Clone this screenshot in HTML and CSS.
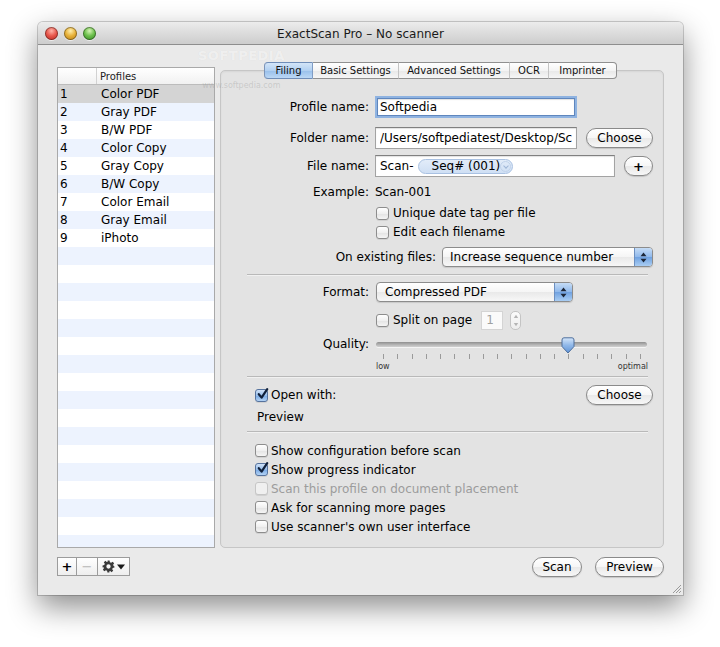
FILE: index.html
```html
<!DOCTYPE html>
<html>
<head>
<meta charset="utf-8">
<title>ExactScan Pro – No scanner</title>
<link rel="stylesheet" href="styles.css">
</head>
<body>
<div class="page">
  <div class="window">
    <div class="titlebar">
      <div class="lights"><span class="light red"></span><span class="light yellow"></span><span class="light green"></span></div>
      <div class="title">ExactScan Pro – No scanner</div>
      <div></div>
    </div>

    <div class="content">
      <div class="list">
        <div class="list-head"><span class="col-num"></span><span class="col-name">Profiles</span></div>
        <div class="list-body">
          <div class="lrow sel"><span class="col-num">1</span><span class="col-name">Color PDF</span></div>
          <div class="lrow"><span class="col-num">2</span><span class="col-name">Gray PDF</span></div>
          <div class="lrow"><span class="col-num">3</span><span class="col-name">B/W PDF</span></div>
          <div class="lrow"><span class="col-num">4</span><span class="col-name">Color Copy</span></div>
          <div class="lrow"><span class="col-num">5</span><span class="col-name">Gray Copy</span></div>
          <div class="lrow"><span class="col-num">6</span><span class="col-name">B/W Copy</span></div>
          <div class="lrow"><span class="col-num">7</span><span class="col-name">Color Email</span></div>
          <div class="lrow"><span class="col-num">8</span><span class="col-name">Gray Email</span></div>
          <div class="lrow"><span class="col-num">9</span><span class="col-name">iPhoto</span></div>
        </div>
      </div>

      <div class="panel">
        <div class="tabs">
          <div class="tab sel t-filing">Filing</div>
          <div class="tab t-basic">Basic Settings</div>
          <div class="tab t-adv">Advanced Settings</div>
          <div class="tab t-ocr">OCR</div>
          <div class="tab t-imp">Imprinter</div>
        </div>
        <div class="tabbox">
          <div class="frow r-profile"><span class="flabel">Profile name:</span><div class="field focus w-profile">Softpedia</div></div>
          <div class="frow r-folder"><span class="flabel">Folder name:</span><div class="field w-folder"><span class="clip">/Users/softpediatest/Desktop/Sc</span></div><div class="btn w-choose">Choose</div></div>
          <div class="frow r-file"><span class="flabel">File name:</span>
            <div class="field w-token">Scan-<span class="token">Seq# (001)<span class="chev"></span></span></div>
            <div class="btn w-plus">+</div>
          </div>
          <div class="frow r-example"><span class="flabel">Example:</span><span>Scan-001</span></div>
          <div class="frow r-unique indent"><span class="cb"></span><span>Unique date tag per file</span></div>
          <div class="frow r-edit indent"><span class="cb"></span><span>Edit each filename</span></div>
          <div class="frow r-existing"><span class="flabel wide">On existing files:</span>
            <div class="popup w-existing"><span>Increase sequence number</span><span class="arrows"><svg width="7" height="11" viewBox="0 0 7 11"><path d="M0.5 4.2 L3.5 0.6 L6.5 4.2Z M0.5 6.8 L3.5 10.4 L6.5 6.8Z" fill="#1d2738"/></svg></span></div>
          </div>
          <div class="sep s1"></div>
          <div class="frow r-format"><span class="flabel">Format:</span>
            <div class="popup w-format"><span>Compressed PDF</span><span class="arrows"><svg width="7" height="11" viewBox="0 0 7 11"><path d="M0.5 4.2 L3.5 0.6 L6.5 4.2Z M0.5 6.8 L3.5 10.4 L6.5 6.8Z" fill="#1d2738"/></svg></span></div>
          </div>
          <div class="frow r-split indent"><span class="cb"></span><span>Split on page</span><div class="numfield">1</div><div class="stepper"><svg width="6" height="15" viewBox="0 0 6 15"><path d="M0.8 5 L3 1.8 L5.2 5Z M0.8 10 L3 13.2 L5.2 10Z" fill="#b4b4b4"/></svg></div></div>
          <div class="frow r-quality"><span class="flabel">Quality:</span>
            <div class="slider"><div class="track"></div>
              <svg class="thumb" width="14" height="17" viewBox="0 0 14 17"><defs><linearGradient id="tg" x1="0" y1="0" x2="0" y2="1"><stop offset="0" stop-color="#d5e6fa"/><stop offset="0.5" stop-color="#8fb7e8"/><stop offset="1" stop-color="#5f93d6"/></linearGradient></defs><path d="M1 3 Q1 0.8 3 0.8 L11 0.8 Q13 0.8 13 3 L13 9.5 L7 16 L1 9.5 Z" fill="url(#tg)" stroke="#4f6f9c" stroke-width="1"/></svg>
            </div>
          </div>
          <div class="ticks"><i></i><i></i><i></i><i></i><i></i><i></i><i></i><i></i><i></i><i></i><i></i><i></i><i></i><i></i><i></i><i></i><i></i><i></i><i></i></div>
          <div class="scale"><span>low</span><span>optimal</span></div>
          <div class="sep s2"></div>
          <div class="frow r-open lower"><span class="cb on"><svg width="13" height="13" viewBox="0 0 13 13"><path d="M2.8 6.2 L5.6 9.6 L11.2 1.2" fill="none" stroke="#10203a" stroke-width="2.2" stroke-linecap="round" stroke-linejoin="round"/></svg></span><span>Open with:</span><div class="btn w-choose push">Choose</div></div>
          <div class="frow r-preview lower"><span class="pv">Preview</span></div>
          <div class="sep s3"></div>
          <div class="frow r-c1 lower"><span class="cb"></span><span>Show configuration before scan</span></div>
          <div class="frow r-c lower"><span class="cb on"><svg width="13" height="13" viewBox="0 0 13 13"><path d="M2.8 6.2 L5.6 9.6 L11.2 1.2" fill="none" stroke="#10203a" stroke-width="2.2" stroke-linecap="round" stroke-linejoin="round"/></svg></span><span>Show progress indicator</span></div>
          <div class="frow r-c lower disabled"><span class="cb"></span><span>Scan this profile on document placement</span></div>
          <div class="frow r-c lower"><span class="cb"></span><span>Ask for scanning more pages</span></div>
          <div class="frow r-c lower"><span class="cb"></span><span>Use scanner's own user interface</span></div>
        </div>
      </div>

      <div class="tools">
        <div class="tool t-add">+</div>
        <div class="tool t-rem">−</div>
        <div class="tool t-gear"><svg width="13" height="13" viewBox="0 0 24 24"><path fill="#3a3a3a" d="M10 1h4l.6 3.2 2.3 1 2.7-1.9 2.8 2.8-1.9 2.7 1 2.3L23 12v0l0 2-3.2.6-1 2.3 1.9 2.7-2.8 2.8-2.7-1.9-2.3 1L14 23h-4l-.6-3.2-2.3-1-2.7 1.9-2.8-2.8 1.9-2.7-1-2.3L1 14v-4l3.2-.6 1-2.300-1.9-2.7 2.8-2.8 2.7 1.9 2.3-1zM12 8a4 4 0 1 0 0 8 4 4 0 1 0 0-8z"/></svg><svg width="8" height="6" viewBox="0 0 8 6"><path d="M0 0.5 L8 0.5 L4 5.5Z" fill="#1a1a1a"/></svg></div>
      </div>
      <div class="actions">
        <div class="btn w-scan">Scan</div>
        <div class="btn w-preview">Preview</div>
      </div>
    </div>

    <svg class="grip" width="12" height="12" viewBox="0 0 12 12"><path d="M11 3 L3 11 M11 6 L6 11 M11 9 L9 11" stroke="#9a9a9a" stroke-width="1"/></svg>
    <div class="watermark"><span class="wm1">SOFTPEDIA</span><span class="wm2">www.softpedia.com</span></div>
  </div>
</div>
</body>
</html>
```
FILE: styles.css
```css
* { box-sizing: border-box; }
html, body { margin: 0; padding: 0; background: #ffffff; }
body {
  width: 720px;
  height: 647px;
  overflow: hidden;
  font-family: "DejaVu Sans", "Liberation Sans", sans-serif;
  font-size: 12px;
  color: #000;
}
.page { padding: 22px 0 0 38px; }

.window {
  position: relative;
  width: 645px;
  height: 573px;
  background: #eaeaea;
  border-radius: 5px 5px 0 0;
  box-shadow: 0 12px 30px rgba(0,0,0,0.45), 0 0 0 1px rgba(0,0,0,0.18);
  display: flex;
  flex-direction: column;
}

/* title bar */
.titlebar {
  height: 23px;
  flex: none;
  display: grid;
  grid-template-columns: 1fr auto 1fr;
  align-items: center;
  background: linear-gradient(#ececec, #d9d9d9 60%, #cdcdcd);
  border-bottom: 1px solid #8e8e8e;
  border-radius: 5px 5px 0 0;
}
.lights { display: flex; gap: 6px; padding-left: 7px; }
.light {
  width: 13px; height: 13px; border-radius: 50%;
  box-shadow: inset 0 0 0 1px rgba(0,0,0,0.35), 0 1px 0 rgba(255,255,255,0.6);
}
.light.red { background: radial-gradient(circle at 50% 30%, #ffb3a8 0, #e8584d 45%, #b3231c 100%); }
.light.yellow { background: radial-gradient(circle at 50% 30%, #fff0b0 0, #e8b23a 45%, #b07712 100%); }
.light.green { background: radial-gradient(circle at 50% 30%, #d7f5b6 0, #6cc04c 45%, #2f7f1e 100%); }
.title { font-size: 12px; color: #1a1a1a; padding-top: 1px; }

/* main content */
.content {
  flex: 1;
  display: grid;
  grid-template-columns: 158px 444px;
  grid-template-rows: 486px 20px;
  column-gap: 5px;
  row-gap: 9px;
  padding: 17px 19px 18px 19px;
}

/* profiles list */
.list {
  margin-top: 5px;
  height: 481px;
  border: 1px solid #a9a9a9;
  display: flex;
  flex-direction: column;
  background: #fff;
}
.list-head {
  height: 17px;
  flex: none;
  display: flex;
  align-items: center;
  font-size: 10px;
  background: linear-gradient(#ffffff, #f1f1f1);
  border-bottom: 1px solid #bcbcbc;
}
.list-head .col-num { width: 39px; height: 100%; border-right: 1px solid #d2d2d2; }
.list-head .col-name { padding-left: 3px; color: #222; }
.list-body {
  flex: 1;
  background: repeating-linear-gradient(#ffffff 0 18px, #edf3fe 18px 36px);
}
.lrow { height: 18px; display: flex; align-items: center; }
.lrow.sel { background: #d4d4d4; }
.lrow .col-num { width: 40px; padding-left: 2px; }
.lrow .col-name { padding-left: 3px; }

/* tabs */
.panel { display: flex; flex-direction: column; }
.tabs {
  position: relative;
  z-index: 1;
  display: flex;
  height: 17px;
  margin-left: 44px;
}
.tab {
  height: 17px;
  font-size: 10px;
  color: #111;
  display: flex;
  align-items: center;
  justify-content: center;
  border-top: 1px solid #909090;
  border-bottom: 1px solid #909090;
  border-right: 1px solid #c4c4c4;
  background: linear-gradient(#ffffff, #f4f4f4 50%, #e8e8e8 51%, #f6f6f6);
}
.tab:first-child { border-left: 1px solid #7c94b8; border-radius: 4px 0 0 4px; }
.tab:last-child { border-right: 1px solid #909090; border-radius: 0 4px 4px 0; }
.tab.sel {
  background: linear-gradient(#d3e5f8, #b2d0f1 50%, #98bfeb 51%, #bcd8f5);
  border-top-color: #6f8db8;
  border-bottom-color: #6f8db8;
  border-right-color: #7f9cc4;
}
.t-filing { width: 49px; }
.t-basic { width: 86px; }
.t-adv { width: 111px; }
.t-ocr { width: 39px; }
.t-imp { width: 68px; }

.tabbox {
  margin-top: -9px;
  height: 478px;
  background: #e3e3e3;
  border: 1px solid #c6c6c6;
  border-radius: 5px;
  padding-top: 25px;
  box-shadow: inset 0 1px 2px rgba(0,0,0,0.06);
}

/* form rows */
.frow { display: flex; align-items: center; }
.flabel { width: 148px; margin-right: 6px; text-align: right; flex: none; }
.flabel.wide { width: 215px; }
.indent { padding-left: 155px; }
.lower { padding-left: 34px; }

.r-profile { height: 22px; }
.r-folder { height: 22px; margin-top: 9px; }
.r-file { height: 22px; margin-top: 6px; }
.r-example { height: 18px; margin-top: 6px; }
.r-unique { height: 18px; margin-top: 3px; }
.r-edit { height: 18px; margin-top: 1px; }
.r-existing { height: 20px; margin-top: 6px; }
.r-format { height: 20px; margin-top: 7px; }
.r-split { height: 20px; margin-top: 8px; }
.r-quality { height: 18px; margin-top: 5px; }
.r-open { height: 20px; margin-top: 8px; }
.r-preview { height: 16px; margin-top: 4px; }
.r-c1 { height: 19px; margin-top: 9px; }
.r-c { height: 19px; }

.sep { height: 1px; background: #b9b9b9; margin-left: 26px; margin-right: 15px; box-shadow: 0 1px 0 rgba(255,255,255,0.5); }
.s1 { margin-top: 7px; }
.s2 { margin-top: 4px; }
.s3 { margin-top: 6px; }

.field {
  height: 22px;
  background: #fff;
  border: 1px solid #a3a3a3;
  border-top-color: #808080;
  padding: 0 4px;
  display: flex;
  align-items: center;
  white-space: nowrap;
  overflow: hidden;
  box-shadow: inset 0 1px 1px rgba(0,0,0,0.12);
}
.clip { display: block; width: 192px; overflow: hidden; }
.w-profile {
  width: 198px;
  height: 18px;
  margin-left: 2px;
  padding: 0 2px;
  border-color: #5f86bd;
  outline: 2px solid #8fb3e1;
}
.w-folder { width: 202px; }
.w-token { width: 240px; padding-left: 4px; }
.token {
  margin-left: 4px;
  width: 95px;
  height: 15px;
  flex: none;
  border-radius: 8px;
  background: linear-gradient(#e2ecf9, #cfdff4);
  border: 1px solid #a9c1e2;
  padding-left: 13px;
  display: flex;
  align-items: center;
  position: relative;
}
.chev {
  position: absolute;
  right: 1px;
  top: 1px;
  width: 11px;
  height: 11px;
  border-radius: 50%;
  border: 1px solid #c0d2ea;
}
.chev::after {
  content: "";
  position: absolute;
  left: 3px;
  top: 2px;
  width: 3px;
  height: 3px;
  border-right: 1px solid #9fb6d6;
  border-bottom: 1px solid #9fb6d6;
  transform: rotate(45deg);
}

.btn {
  height: 20px;
  border: 1px solid #8a8a8a;
  border-radius: 10px;
  background: linear-gradient(#ffffff, #f6f6f6 50%, #e9e9e9 51%, #f7f7f7);
  display: flex;
  align-items: center;
  justify-content: center;
  box-shadow: 0 1px 1px rgba(0,0,0,0.15);
  flex: none;
}
.w-choose { width: 67px; margin-left: 9px; }
.push { margin-left: auto; margin-right: 10px; }
.w-plus { width: 29px; margin-left: 9px; font-weight: bold; font-size: 13px; }
.w-scan { width: 50px; }
.w-preview { width: 69px; }

.popup {
  height: 20px;
  border: 1px solid #8c8c8c;
  border-radius: 4px;
  background: linear-gradient(#ffffff, #f5f5f5 50%, #e9e9e9 51%, #f7f7f7);
  display: flex;
  align-items: center;
  overflow: hidden;
  box-shadow: 0 1px 1px rgba(0,0,0,0.12);
}
.w-existing { width: 211px; padding-left: 7px; }
.w-format { width: 197px; margin-left: 1px; padding-left: 8px; }
.arrows {
  margin-left: auto;
  width: 18px;
  height: 100%;
  display: flex;
  align-items: center;
  justify-content: center;
  border-left: 1px solid #6c8fc0;
  background: linear-gradient(#c5dcf6, #8fb8eb 50%, #6fa1e0 51%, #a9cdf3);
}

.cb {
  width: 13px;
  height: 13px;
  flex: none;
  margin-right: 4px;
  border: 1px solid #8d8d8d;
  border-radius: 3px;
  background: linear-gradient(#ffffff, #f0f0f0 50%, #e3e3e3 51%, #f5f5f5);
  box-shadow: 0 1px 0 rgba(0,0,0,0.08);
  position: relative;
}
.cb.on {
  border-color: #56739e;
  background: linear-gradient(#cfe1f7, #98bfec 50%, #78a9e4 51%, #b3d2f4);
}
.cb.on svg { position: absolute; left: 0; top: -2px; }
.disabled { color: #9c9c9c; }
.disabled .cb { border-color: #c6c6c6; background: #f0f0f0; }
.lower .cb { margin-right: 3px; }

.numfield {
  margin-left: 9px;
  width: 22px;
  height: 19px;
  background: #fafafa;
  border: 1px solid #d4d4d4;
  color: #a0a0a0;
  padding-left: 4px;
  display: flex;
  align-items: center;
}
.stepper {
  margin-left: 7px;
  width: 11px;
  height: 19px;
  border: 1px solid #c4c4c4;
  border-radius: 5px;
  background: linear-gradient(#fbfbfb, #ededed);
  display: flex;
  align-items: center;
  justify-content: center;
}

.slider {
  position: relative;
  margin-left: 1px;
  width: 271px;
  height: 18px;
  display: flex;
  align-items: center;
}
.track {
  width: 100%;
  height: 5px;
  border-radius: 3px;
  background: linear-gradient(#8f8f8f, #b9b9b9 60%, #d0d0d0);
  box-shadow: 0 1px 0 rgba(255,255,255,0.6);
}
.thumb { position: absolute; left: 185px; top: 2px; }

.ticks {
  margin-top: 1px;
  margin-left: 162px;
  width: 258px;
  height: 5px;
  display: flex;
  justify-content: space-between;
}
.ticks i { width: 1px; height: 5px; background: #9a9a9a; }
.scale {
  margin-top: 2px;
  margin-left: 155px;
  width: 272px;
  height: 11px;
  display: flex;
  justify-content: space-between;
  align-items: center;
  font-size: 8px;
  color: #333;
}

.pv { padding-left: 2px; }

/* bottom */
.tools { display: flex; align-self: start; }
.tool {
  height: 19px;
  border: 1px solid #9c9c9c;
  border-left: none;
  background: linear-gradient(#ffffff, #eeeeee);
  display: flex;
  align-items: center;
  justify-content: center;
  gap: 2px;
  font-size: 13px;
}
.t-add { width: 20px; border-left: 1px solid #9c9c9c; font-weight: bold; }
.t-rem { width: 21px; color: #b5b5b5; }
.t-gear { width: 32px; }
.actions { display: flex; justify-content: flex-end; gap: 13px; }

.grip { position: absolute; right: 1px; bottom: 1px; }

.watermark {
  position: absolute;
  left: 160px;
  top: 28px;
  display: flex;
  flex-direction: column;
  align-items: center;
  pointer-events: none;
}
.wm1 { font-size: 13px; line-height: 11px; height: 11px; font-weight: bold; letter-spacing: 0.5px; color: rgba(255,255,255,0.6); text-shadow: 0 0 1px rgba(0,0,0,0.08); }
.wm2 { font-size: 8px; line-height: 10px; color: rgba(150,150,150,0.35); margin-top: 20px; }
```
